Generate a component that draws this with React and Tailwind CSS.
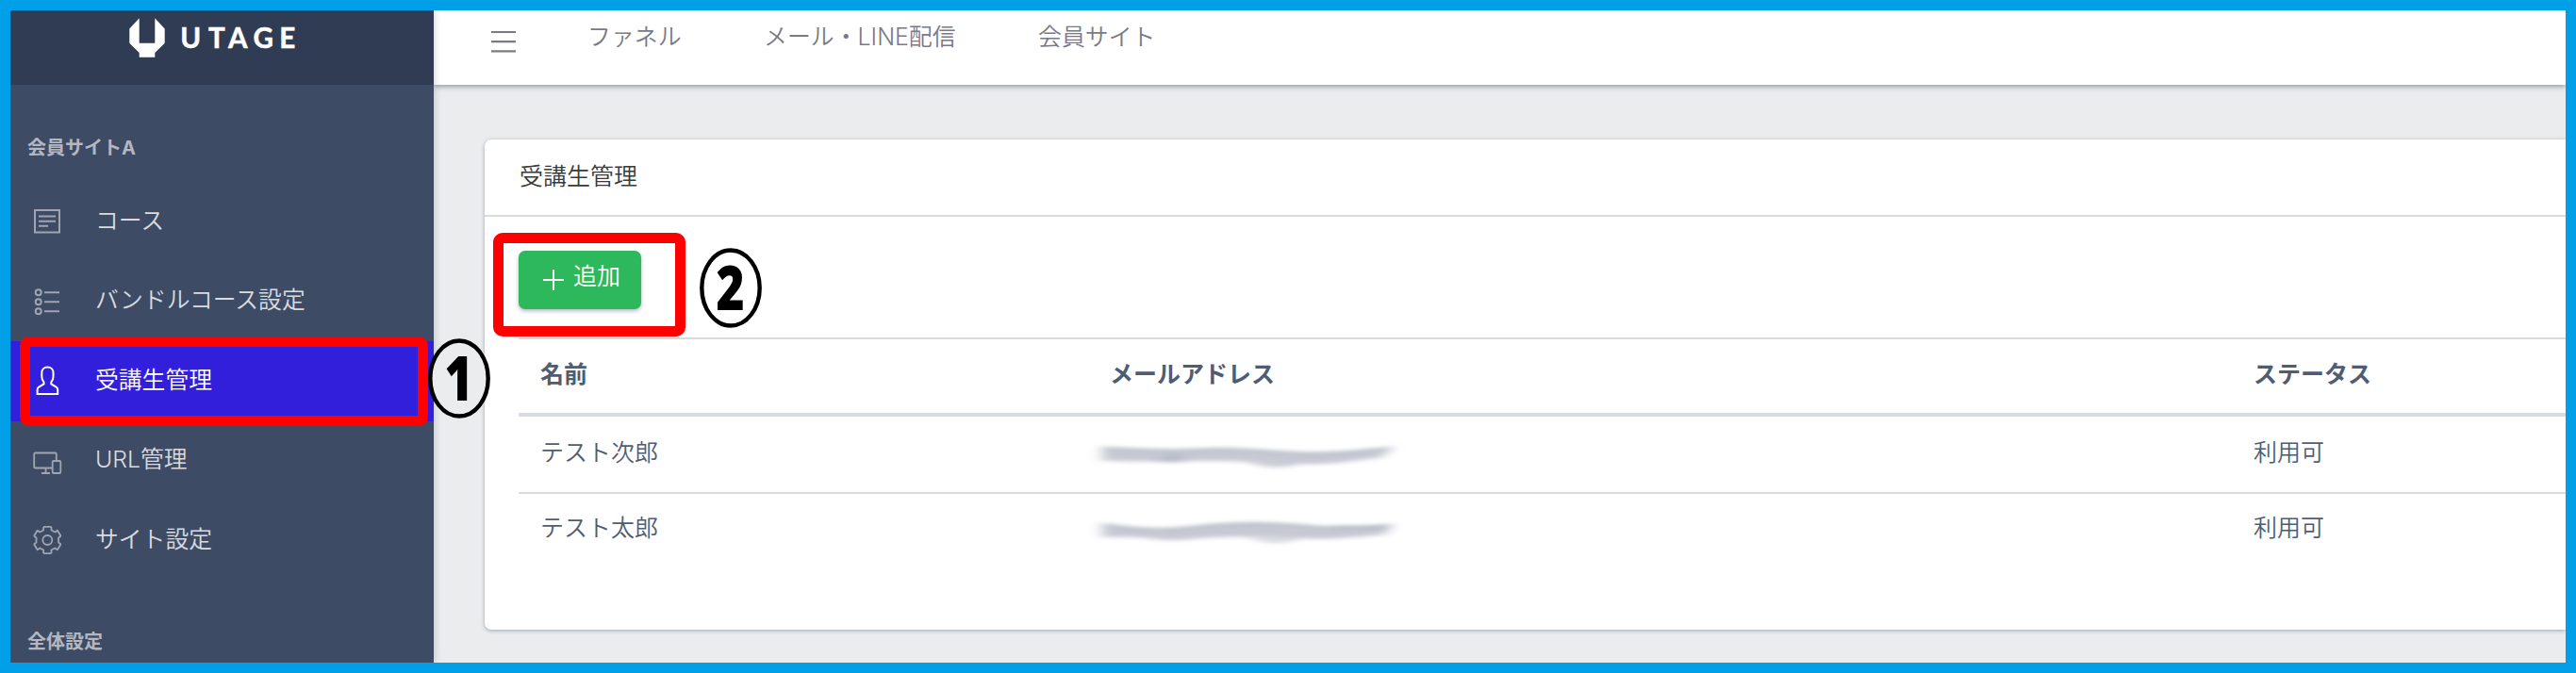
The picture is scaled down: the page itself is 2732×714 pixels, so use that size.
const line = { fill: 'none', stroke: 'currentColor', strokeWidth: 2 };

function NotesIcon() {
  return (
    <svg viewBox="0 0 32 32" className="h-8 w-8" {...line}>
      <rect x="3" y="4" width="26" height="23.5" />
      <path d="M7 10.5h18M7 15.7h18M7 20.7h10" />
    </svg>
  );
}

function ListIcon() {
  return (
    <svg viewBox="0 0 32 32" className="h-8 w-8" {...line}>
      <circle cx="6.7" cy="6.2" r="3" />
      <circle cx="6.7" cy="16.2" r="3" />
      <circle cx="6.7" cy="26.2" r="3" />
      <path d="M13 6.2h16M13 16.2h16M13 26.2h16" />
    </svg>
  );
}

function UserIcon() {
  return (
    <svg viewBox="0 0 32 32" className="h-8 w-8" {...line}>
      <path d="M16.400 1.400c-3.600 0-6.100 2.500-6.100 6v4c0 2.400 .8 4.500 2.200 6v2l-5.300 3.200a3.200 3.200 0 0 0-1.600 2.800v4.500h21.600v-4.500a3.200 3.200 0 0 0-1.600-2.800l-5.300-3.200v-2c1.400-1.500 2.200-3.600 2.200-6v-4c0-3.500-2.500-6-6.100-6z" />
    </svg>
  );
}

function DevicesIcon() {
  return (
    <svg viewBox="0 0 32 32" className="h-8 w-8" {...line} strokeWidth={1.800}>
      <path d="M21 23.500H3.500a1.300 1.300 0 0 1-1.300-1.300V8.800a1.300 1.300 0 0 1 1.300-1.300h21a1.300 1.300 0 0 1 1.300 1.300v7" />
      <path d="M14.500 23.500v5.500M10 29h9" />
      <rect x="21.700" y="16" width="8.600" height="13" rx="1.300" />
    </svg>
  );
}

function GearIcon() {
  return (
    <svg viewBox="-16.300 -16 32 32" className="h-8 w-8" {...line} strokeWidth={1.800} strokeLinejoin="round">
      <path d="M-3.200-14.200H3.200L4.200-13.400V-10.500L8-8.500 10.600-10.200 14-4.800 13.800-4 11.800-2.600V2.600L13.800 4 14 4.800 10.600 10.200 8 8.500 4.200 10.500V13.400L3.200 14.200H-3.200L-4.200 13.400V10.500L-8 8.500-10.600 10.200-14 4.800-13.800 4-11.800 2.600V-2.600L-13.800-4-14-4.800-10.600-10.200-8-8.500-4.200-10.500V-13.400z" />
      <circle cx="0" cy="0" r="5" />
    </svg>
  );
}

function Logo() {
  return (
    <svg viewBox="0 0 180 44" className="h-11 w-[180px] overflow-visible" fill="#fff">
      <path d="M10.700 0.300 0.300 11.500v15.300L10.700 37v4.700h16.600V37L37.700 26.800V11.500L27.300 0.300v26.400H10.700z" />
      <text
        x="54.300 84 105 131.500 159.200"
        y="31.600"
        fontSize="29.500"
        fontWeight="700"
        fontFamily="Lato, sans-serif"
        stroke="#fff"
        strokeWidth="0.500"
      >
        UTAGE
      </text>
    </svg>
  );
}

function NumberMark({ n, fill }) {
  return (
    <svg viewBox="0 0 66 85" className="h-[85px] w-[66px] overflow-visible">
      <ellipse cx="33" cy="42.500" rx="30.700" ry="40" fill={fill} stroke="#000" strokeWidth="4.400" />
      <text
        transform="translate(32.500 66) scale(.78 1)"
        textAnchor="middle"
        fontSize="66"
        fontWeight="800"
        fontFamily="'Open Sans', sans-serif"
      >
        {n}
      </text>
    </svg>
  );
}

const items = [
  { label: 'コース', Icon: NotesIcon },
  { label: 'バンドルコース設定', Icon: ListIcon },
  { label: '受講生管理', Icon: UserIcon, active: true },
  { label: 'URL管理', Icon: DevicesIcon },
  { label: 'サイト設定', Icon: GearIcon },
];

function Sidebar() {
  return (
    <aside className="relative z-10 flex w-[449px] shrink-0 flex-col bg-[#3e4b64] shadow-[0_0_8px_rgba(60,75,100,0.3)]">
      <div className="h-[79px] shrink-0 bg-[#303c54] pl-[126px] pt-2">
        <Logo />
      </div>
      <div className="mt-[52px] h-[30px] pl-[18px] text-[20px] font-bold leading-[30px] text-[#b2b7c1]">会員サイトA</div>
      <nav className="mt-[21px] flex flex-col">
        {items.map(({ label, Icon, active }) => (
          <div
            key={label}
            className={
              active
                ? 'flex h-[84.500px] items-center bg-[#321fdb] pl-[23px] text-white'
                : 'flex h-[84.500px] items-center pl-[23px] text-[#d9dbe0]'
            }
          >
            <span className={active ? 'text-white' : 'text-[#9fa5b2]'}>
              <Icon />
            </span>
            <span className="-mt-[3px] ml-[35px] text-[24.800px] font-[350] leading-9">{label}</span>
          </div>
        ))}
      </nav>
      <div className="mt-[50px] h-[30px] pl-[18px] text-[20px] font-bold leading-[30px] text-[#b2b7c1]">全体設定</div>
    </aside>
  );
}

function Header() {
  return (
    <header className="relative flex h-[79px] shrink-0 bg-white pl-[61px] text-[24.900px] font-[350] leading-9 text-[#7a7988] shadow-[0_2px_5px_rgba(60,75,100,0.5)]">
      <svg viewBox="0 0 26 24" className="mt-[21px] h-6 w-[26px]" {...line} strokeWidth={2.200}>
        <path d="M0 2h26M0 12.200h26M0 22.400h26" />
      </svg>
      <div className="ml-[76px] mt-[10px] flex">
        <span className="w-[187px]">ファネル</span>
        <span className="w-[291px]">メール・LINE配信</span>
        <span>会員サイト</span>
      </div>
    </header>
  );
}

function Smudge({ second }) {
  return (
    <svg viewBox="0 0 340 40" className="-ml-[16px] h-10 w-[340px] overflow-visible">
      <defs>
        <filter id="soft" x="-15%" y="-60%" width="130%" height="220%">
          <feGaussianBlur stdDeviation="7 2" />
        </filter>
      </defs>
      {second ? (
        <g filter="url(#soft)">
          <path d="M8 15C45 19 75 21 105 17S190 10 225 16S285 17 315 16L308 25C275 28 245 31 220 29S160 27 130 28S90 33 65 30S35 28 8 28z" fill="#c6c9d3" />
          <path d="M8 14C45 20 75 21 105 17S190 12 225 16S285 17 315 15" fill="none" stroke="#a8afbb" strokeWidth="1.800" />
          <path d="M250 17H306" stroke="#939dab" strokeWidth="1.800" />
          <path d="M160 28C190 37 200 35 225 28" fill="#d5d8df" />
        </g>
      ) : (
        <g filter="url(#soft)">
          <path d="M8 13C50 15 75 17 110 15S160 15 190 17S245 21 315 13L305 23C275 27 245 32 215 30S150 27 115 27S55 28 8 27z" fill="#c6c9d3" />
          <path d="M8 13C50 15 75 17 110 15S160 15 190 17S245 21 315 13" fill="none" stroke="#a8afbb" strokeWidth="1.800" />
          <path d="M66 27h30M75 22h18" stroke="#8a95a5" strokeWidth="1.600" />
          <path d="M160 28C185 36 205 35 220 29" fill="#cbced7" />
        </g>
      )}
    </svg>
  );
}

const cols = 'grid grid-cols-[604px_1213px_1fr] pl-[23px]';

function Card() {
  return (
    <section className="ml-[54px] mt-[58px] h-[520px] rounded-l-[7px] bg-white text-[25px] font-[350] leading-9 text-[#4f5d73] shadow-[0_1px_4px_rgba(60,75,100,0.45)]">
      <div className="h-[82px] border-b-2 border-[#d8dbe0] pl-[37px] pt-[21px] text-[#3a3a3a]">受講生管理</div>
      <div className="pl-9 pt-9">
        <button className="flex h-[62px] w-[130px] rounded-[7px] bg-[#2eb85c] pl-[26px] text-white shadow-[0_2px_4px_rgba(60,75,100,0.4)]">
          <svg viewBox="0 0 22 22" className="mt-5 h-[22px] w-[22px]" {...line}>
            <path d="M11 0v22M0 11h22" />
          </svg>
          <span className="ml-[10px] mt-[9px] text-[25px] font-[350] leading-9">追加</span>
        </button>
        <div className="mt-[30px] border-t-2 border-[#d8dbe0]">
          <div className={`${cols} h-[82px] border-b-4 border-[#d8dbe0] pt-[19px] font-bold`}>
            <span>名前</span>
            <span>メールアドレス</span>
            <span>ステータス</span>
          </div>
          <div className={`${cols} h-[82px] border-b-2 border-[#d8dbe0] pt-[20px]`}>
            <span>テスト次郎</span>
            <Smudge />
            <span>利用可</span>
          </div>
          <div className={`${cols} h-20 pt-[18px]`}>
            <span>テスト太郎</span>
            <Smudge second />
            <span>利用可</span>
          </div>
        </div>
      </div>
    </section>
  );
}

export default function App() {
  return (
    <div
      lang="ja"
      className="relative flex h-[714px] w-[2732px] overflow-hidden border-[11px] border-[#00a0e9] bg-[#ebecee] font-['Inter','Noto_Sans_CJK_JP',sans-serif]"
    >
      <Sidebar />
      <main className="flex min-w-0 flex-1 flex-col overflow-hidden">
        <Header />
        <Card />
      </main>
      <div className="absolute left-[10px] top-[346px] z-20 h-[95px] w-[433px] rounded-[10px] border-[11px] border-[#ff0000]" />
      <div className="absolute left-[512px] top-[236px] z-20 h-[110px] w-[204px] rounded-[10px] border-[11px] border-[#ff0000]" />
      <div className="absolute left-[443px] top-[348px] z-20">
        <NumberMark n="1" fill="#ebecee" />
      </div>
      <div className="absolute left-[731px] top-[252px] z-20">
        <NumberMark n="2" fill="#fff" />
      </div>
    </div>
  );
}
